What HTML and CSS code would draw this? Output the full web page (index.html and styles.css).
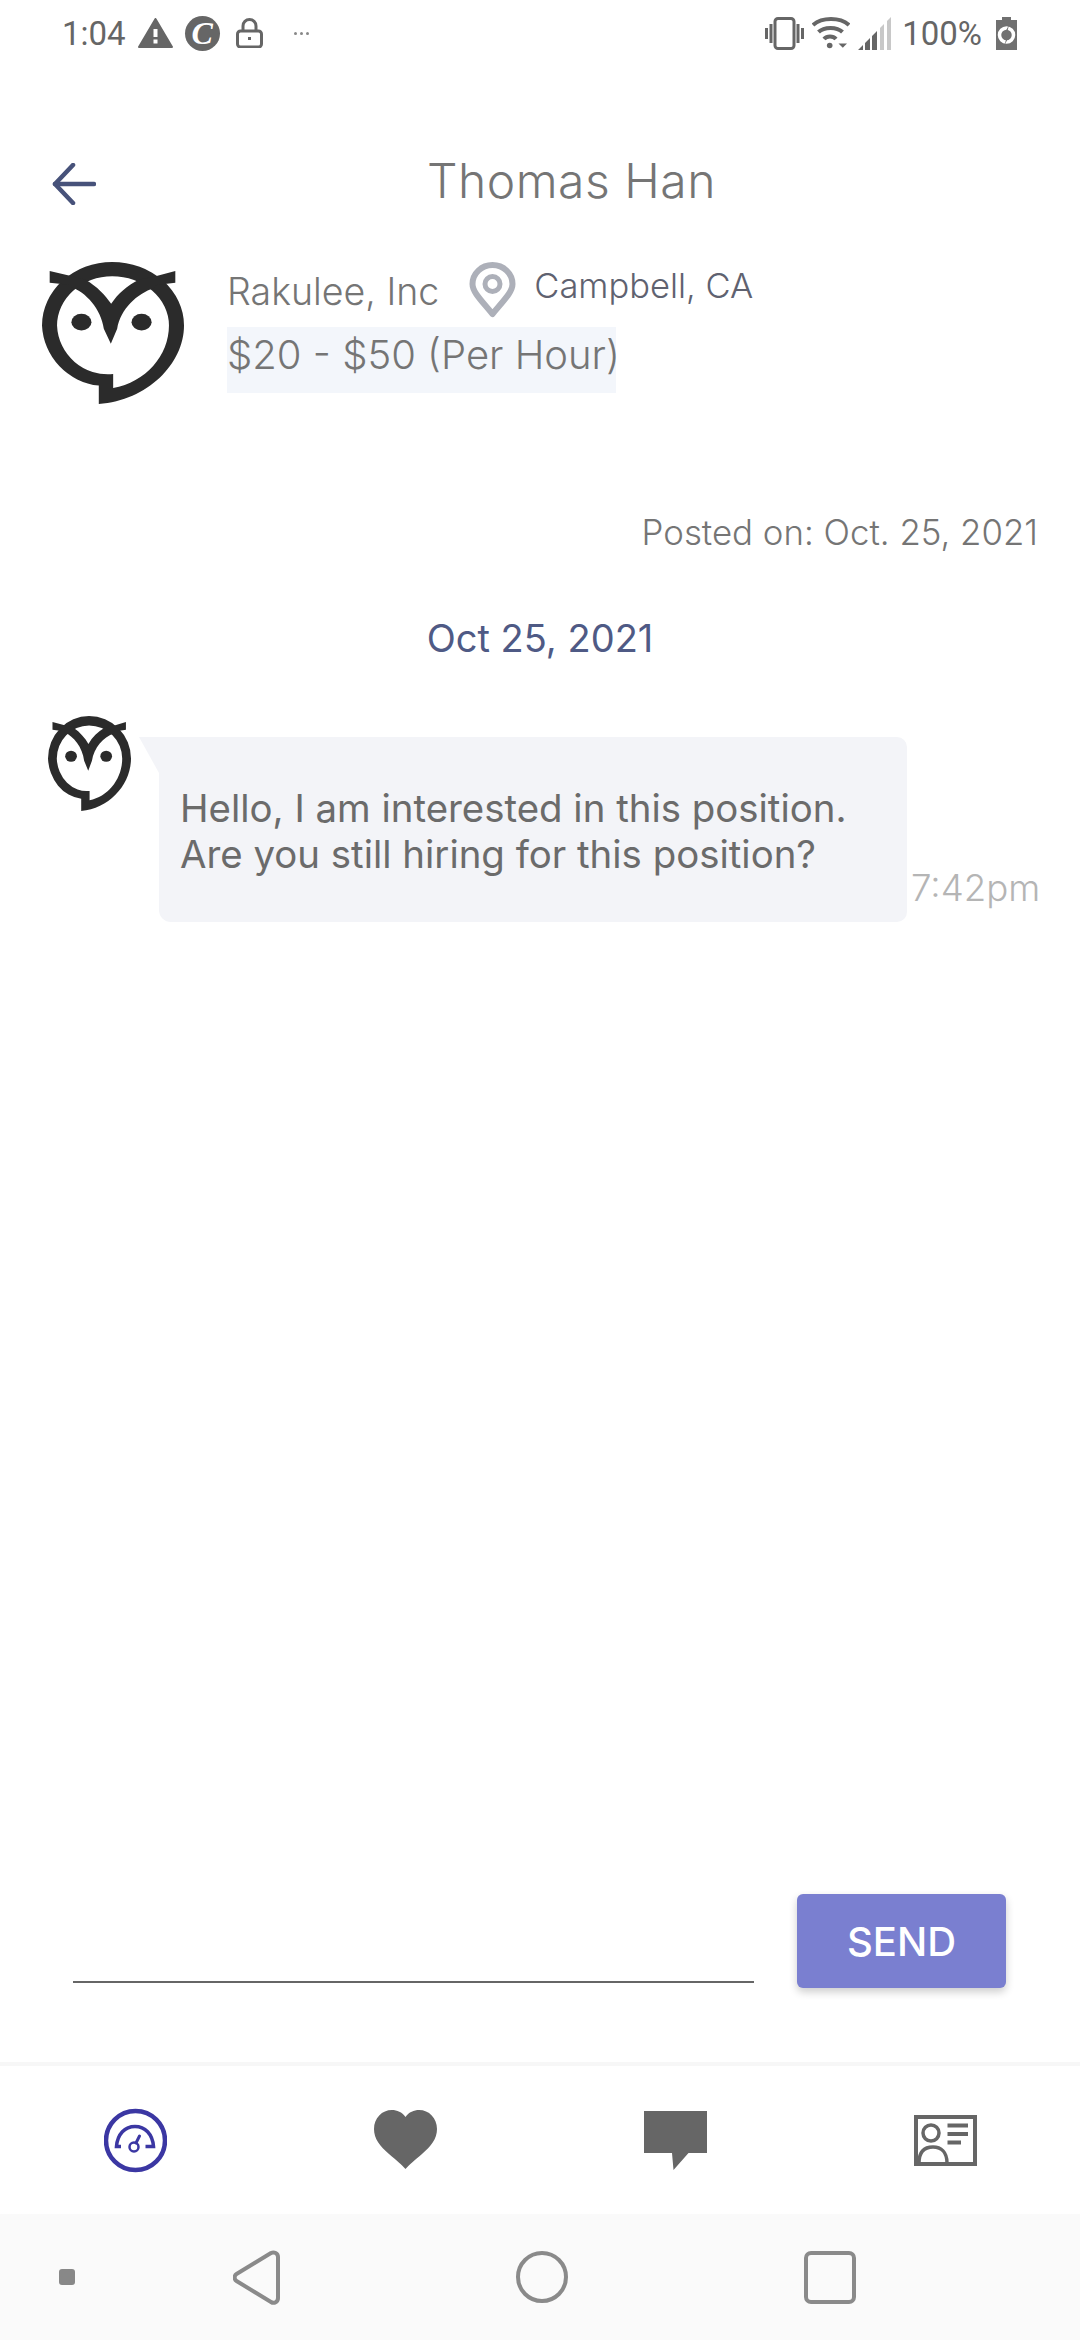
FILE: index.html
```html
<!DOCTYPE html>
<html lang="en">
<head>
    <meta charset="UTF-8">
    <meta name="viewport" content="width=device-width, initial-scale=1.0">
    <title>Thomas Han</title>
    <link rel="stylesheet" href="styles.css">
</head>
<body>
    <svg class="defs" width="0" height="0">
        <symbol id="owl" viewBox="35 35 425 425" preserveAspectRatio="none">
            <path fill-rule="evenodd" d="M205 460V405A190 190 0 0 1 35 225A210 190 0 0 1 245 35A215 190 0 0 1 460 225C460 340 350 450 205 460ZM248 412V370A152 152 0 0 1 80 225A165 147 0 0 1 245 78A170 147 0 0 1 415 225C415 315 345 395 248 412Z"/>
            <path d="M58 62 125 78 165 88C200 108 225 135 242 160 262 130 290 105 325 88L375 78 434 62V97L378 104 370 113C320 130 270 175 260 235L241 280 220 235C212 175 165 125 122 110L115 103 58 97Z"/>
            <ellipse cx="153" cy="215" rx="30" ry="25"/>
            <ellipse cx="333" cy="215" rx="30" ry="25"/>
        </symbol>
    </svg>

    <div class="screen">
        <div class="status-bar">
            <div class="status-left">
                <span class="status-time">1:04</span>
                <svg class="icon-warning" width="35" height="30" viewBox="0 0 35 30">
                    <path fill="#666" stroke="#666" stroke-width="2" stroke-linejoin="round" d="M17.5 1 34 29H1Z"/>
                    <path fill="#fff" d="M15.5 11h4v8h-4zM15.5 21.500h4v4h-4z"/>
                </svg>
                <span class="status-c">C</span>
                <svg class="icon-lock" width="27" height="30" viewBox="0 0 27 30">
                    <rect x="1.500" y="13" width="24" height="16" rx="3" fill="none" stroke="#666" stroke-width="3"/>
                    <path d="M7 13V8a6.500 6.500 0 0 1 13 0v5" fill="none" stroke="#666" stroke-width="3"/>
                    <rect x="12" y="19" width="3" height="3" fill="#666"/>
                </svg>
                <span class="status-dots">
                    <i></i><i></i><i></i>
                </span>
            </div>
            <div class="status-right">
                <svg width="39" height="33" viewBox="0 0 39 33">
                    <rect x="10" y="1.500" width="19" height="30" rx="3" fill="none" stroke="#666" stroke-width="3"/>
                    <path stroke="#666" stroke-width="3" d="M1.500 11v11M6 7v19M33 7v19M37.500 11v11"/>
                </svg>
                <svg width="38" height="33" viewBox="0 0 38 33" fill="none" stroke="#666" stroke-width="4">
                    <path d="M1 8C10 0 28 0 37 8"/>
                    <path d="M6.500 15C12 9.500 25 9.500 30.500 15"/>
                    <path d="M12 22C15 18.500 21 18.500 24 22"/>
                    <circle cx="17.700" cy="28.500" r="2.800" fill="#666" stroke="none"/>
                    <path d="M26.500 26.500h8.500l-4.200 4.200z" fill="#666" stroke="none"/>
                </svg>
                <svg width="33" height="33" viewBox="0 0 33 33">
                    <path fill="#666" d="M0 33 5 28v5zM7 26l5-5v12H7zM14 19l5-5v19h-5z"/>
                    <path fill="#c8c8c8" d="M22 11l4-4v26h-4zM29 4l4-4v33h-4z"/>
                </svg>
                <span class="status-battery">100%</span>
                <svg width="21" height="33" viewBox="0 0 21 33">
                    <path fill="#707070" d="M6 0h9v3h6v30H0V3h6z"/>
                    <circle cx="10.500" cy="18" r="7" fill="none" stroke="#fff" stroke-width="3.500"/>
                    <path fill="#707070" d="M13 8 7 19h4L8.500 28 15 16h-4z"/>
                </svg>
            </div>
        </div>

        <div class="top-bar">
            <a class="back-link" href="#">
                <svg width="44" height="42" viewBox="0 0 44 42" fill="none" stroke="#47527a" stroke-width="4.500" stroke-linecap="round" stroke-linejoin="round">
                    <path d="M21 2 3 21l18 19"/>
                    <path d="M3 21h39"/>
                </svg>
            </a>
            <h1 class="title">Thomas Han</h1>
        </div>

        <div class="job-info">
            <svg class="owl-large"><use href="#owl"/></svg>
            <div class="job-text">
                <div class="job-line">
                    <span class="company">Rakulee, Inc</span>
                    <svg class="pin" width="47" height="56" viewBox="0 0 47 56">
                        <path fill="none" stroke="#adb0b9" stroke-width="6" stroke-linejoin="round" d="M23.500 52C12 38 3.500 30 3.500 22a20 19 0 0 1 40 0C43.500 30 35 38 23.500 52Z"/>
                        <circle cx="23.500" cy="22" r="7.500" fill="none" stroke="#adb0b9" stroke-width="5"/>
                    </svg>
                    <span class="location">Campbell, CA</span>
                </div>
                <div class="salary">$20 - $50 (Per Hour)</div>
            </div>
        </div>

        <p class="posted">Posted on: Oct. 25, 2021</p>
        <p class="chat-date">Oct 25, 2021</p>

        <div class="chat">
            <div class="message">
                <svg class="owl-small"><use href="#owl"/></svg>
                <div class="bubble">Hello, I am interested in this position.<br>Are you still hiring for this position?</div>
                <span class="message-time">7:42pm</span>
            </div>
        </div>

        <div class="composer">
            <input class="composer-input" type="text">
            <button class="send-button" type="button">SEND</button>
        </div>

        <div class="tab-bar">
            <a class="tab" href="#">
                <svg width="63" height="65" viewBox="0 0 63 65" fill="none" stroke="#3b37a3">
                    <circle cx="31.500" cy="32.500" r="29.500" stroke-width="4.500"/>
                    <path stroke-width="3.500" d="M17 38.500H12.500C13.500 26 21 18.500 31 18.500 41 18.500 48.500 26 49.500 38.500H41.500"/>
                    <circle cx="30" cy="39" r="4.500" stroke-width="2.500"/>
                    <path stroke-width="3" stroke-linecap="round" d="M32 35l3.500-7"/>
                </svg>
            </a>
            <a class="tab" href="#">
                <svg width="63" height="60" viewBox="0 0 63 60" fill="#666">
                    <path d="M31.500 59C28 55 22 50 15 44 6 36 0 29 0 19 0 8 8 0 18 0 23 0 28 2 31.500 7 35 2 40 0 45 0 55 0 63 8 63 19 63 29 57 36 48 44 41 50 35 55 31.500 59Z"/>
                </svg>
            </a>
            <a class="tab" href="#">
                <svg width="63" height="59" viewBox="0 0 63 59" fill="#666">
                    <path d="M0 0H63V42H44.500L29.500 59 28 42H0Z"/>
                </svg>
            </a>
            <a class="tab" href="#">
                <svg width="63" height="51" viewBox="0 0 63 51" fill="none" stroke="#666">
                    <rect x="2" y="2" width="59" height="47" stroke-width="4"/>
                    <circle cx="17" cy="18" r="8" stroke-width="3.500"/>
                    <path stroke-width="3.500" d="M5 48C5 36 11 32 19 32 27 32 33 37 33 48"/>
                    <path stroke-width="4" d="M33.500 10.500H54M33.500 19H54M33.500 27.500H47"/>
                </svg>
            </a>
        </div>

        <div class="system-nav">
            <span class="nav-dot"></span>
            <svg width="47" height="55" viewBox="0 0 47 55" fill="none" stroke="#8a8a8a" stroke-width="4" stroke-linejoin="round">
                <path d="M3.500 24 38 3C41 1.500 45 3 45 7V48C45 52 41 54 38 52L3.500 31C1 29.500 1 25.500 3.500 24Z"/>
            </svg>
            <span class="nav-circle"></span>
            <span class="nav-square"></span>
        </div>
    </div>
</body>
</html>
```

FILE: styles.css
```css
* {
    margin: 0;
    padding: 0;
    box-sizing: border-box;
}

body {
    background-color: #fff;
    font-family: "Inter", sans-serif;
}

.defs {
    position: absolute;
}

.screen {
    display: flex;
    flex-direction: column;
    height: 2340px;
    overflow: hidden;
}

/* status bar */
.status-bar {
    display: flex;
    justify-content: space-between;
    align-items: center;
    height: 66px;
    padding: 0 63px 0 62px;
    color: #666;
    font-family: "Roboto", sans-serif;
    font-size: 33px;
}

.status-left,
.status-right {
    display: flex;
    align-items: center;
}

.status-time {
    margin-right: 12px;
}

.status-c {
    width: 35px;
    height: 35px;
    margin: 0 16px 0 12px;
    border-radius: 50%;
    background: #666;
    color: #fff;
    font-family: "Liberation Serif", serif;
    font-style: italic;
    font-weight: bold;
    font-size: 32px;
    line-height: 35px;
    text-align: center;
}

.status-dots {
    display: flex;
    gap: 3px;
    margin-left: 31px;
}

.status-dots i {
    width: 3px;
    height: 3px;
    border-radius: 50%;
    background: #888;
}

.status-right {
    gap: 8px;
}

.status-battery {
    margin: 0 6px 0 3px;
}

/* header */
.top-bar {
    display: flex;
    align-items: center;
    height: 180px;
    padding: 48px 0 0 52px;
}

.back-link {
    display: flex;
    margin-top: 8px;
}

.title {
    margin-left: 331px;
    color: #757575;
    font-size: 48px;
    font-weight: 300;
    letter-spacing: 0.5px;
}

.job-info {
    display: flex;
    padding: 16px 0 0 42px;
}

.owl-large {
    width: 142px;
    height: 142px;
    fill: #2b2b2b;
}

.job-text {
    margin-left: 43px;
}

.job-line {
    display: flex;
    align-items: flex-start;
    height: 65px;
}

.company {
    margin-top: 7px;
    color: #757575;
    font-size: 37.5px;
    font-weight: 300;
}

.pin {
    margin-left: 30px;
}

.location {
    margin: 3px 0 0 18px;
    color: #5f6270;
    font-size: 34.5px;
    font-weight: 300;
}

.salary {
    width: 389px;
    height: 66px;
    background: #f3f6fb;
    color: #757575;
    font-size: 40px;
    font-weight: 300;
    line-height: 56px;
    white-space: nowrap;
}

.posted {
    margin-top: 107px;
    padding-right: 42px;
    color: #757575;
    font-size: 34.8px;
    font-weight: 300;
    text-align: right;
}

.chat-date {
    margin-top: 62px;
    color: #4f5a85;
    font-size: 38px;
    text-align: center;
    font-weight: 400;
}

/* chat */
.chat {
    flex: 1;
    padding: 55px 0 0 48px;
}

.message {
    display: flex;
    align-items: flex-end;
}

.owl-small {
    align-self: flex-start;
    flex-shrink: 0;
    width: 83px;
    height: 95px;
    fill: #2b2b2b;
}

.bubble {
    position: relative;
    flex-shrink: 0;
    width: 748px;
    height: 185px;
    margin: 21px 0 0 28px;
    padding: 48px 0 0 21px;
    border-radius: 0 10px 10px 12px;
    background: #f3f4f8;
    color: #6b6b6b;
    font-size: 38.4px;
    line-height: 46px;
}

.bubble::before {
    content: "";
    position: absolute;
    top: 0;
    left: -20px;
    width: 20px;
    height: 36px;
    background: #f3f4f8;
    clip-path: polygon(0 0, 100% 0, 100% 100%);
}

.message-time {
    margin: 0 0 12px 4px;
    color: #b5b5b5;
    font-size: 36.7px;
    font-weight: 300;
    white-space: nowrap;
}

/* composer */
.composer {
    display: flex;
    align-items: flex-end;
    height: 170px;
    padding: 0 0 74px 73px;
}

.composer-input {
    width: 681px;
    height: 60px;
    margin-bottom: 5px;
    border: none;
    border-bottom: 2px solid #666;
    outline: none;
}

.send-button {
    width: 209px;
    height: 94px;
    margin-left: 43px;
    border: none;
    border-radius: 6px;
    background: #7a7fd0;
    box-shadow: 0 4px 8px rgba(0, 0, 0, 0.2);
    color: #fff;
    font-family: "Inter", sans-serif;
    font-size: 40px;
    font-weight: 500;
    cursor: pointer;
}

/* bottom tabs */
.tab-bar {
    display: grid;
    grid-template-columns: repeat(4, 270px);
    align-items: center;
    justify-items: center;
    height: 152px;
    border-top: 4px solid #f7f7f7;
}

.tab {
    display: flex;
}

.system-nav {
    display: flex;
    align-items: center;
    height: 126px;
    background: #fafafa;
    padding-left: 59px;
}

.nav-dot {
    width: 16px;
    height: 16px;
    border-radius: 3px;
    background: #888;
}

.system-nav svg {
    margin-left: 158px;
}

.nav-circle {
    width: 52px;
    height: 52px;
    margin-left: 236px;
    border: 4px solid #8a8a8a;
    border-radius: 50%;
}

.nav-square {
    width: 52px;
    height: 53px;
    margin-left: 236px;
    border: 4px solid #8a8a8a;
    border-radius: 7px;
}
```
